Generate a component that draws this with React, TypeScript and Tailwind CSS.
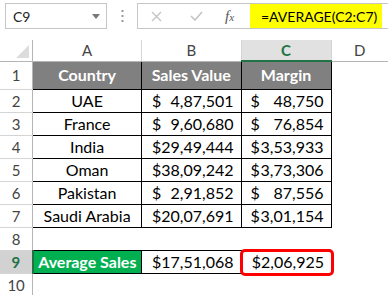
import React from 'react';

type Row = { n: number; country: string; sales: string; margin: string };

const ROWS: Row[] = [
  { n: 2, country: 'UAE', sales: '4,87,501', margin: '48,750' },
  { n: 3, country: 'France', sales: '9,60,680', margin: '76,854' },
  { n: 4, country: 'India', sales: '29,49,444', margin: '3,53,933' },
  { n: 5, country: 'Oman', sales: '38,09,242', margin: '3,73,306' },
  { n: 6, country: 'Pakistan', sales: '2,91,852', margin: '87,556' },
  { n: 7, country: 'Saudi Arabia', sales: '20,07,691', margin: '3,01,154' },
];

const rowHead = 'border-b border-r border-[#d4d4d4] border-r-[#b5b5b5] text-center text-[#444] text-[15px] p-0';
const dataCell = 'border border-black text-[16px] text-black p-0';

const Money: React.FC<{ value: string; pl: string; pr: string }> = ({ value, pl, pr }) => (
  <div className={`flex justify-between ${pl} ${pr}`}>
    <span>$</span>
    <span>{value}</span>
  </div>
);

const App: React.FC = () => {
  return (
    <div className="w-[388px] h-[295px] overflow-hidden bg-white font-['Lato','Liberation_Sans',sans-serif] select-none">
      {/* Name box + formula bar */}
      <div className="h-[40px] flex items-start pt-[3px] pl-[5px]">
        <div className="w-[102px] h-[26px] border border-[#c6c6c6] flex items-center justify-between pl-[7px] pr-[6px]">
          <span className="text-[14px] text-[#222]">C9</span>
          <svg width="8" height="5" viewBox="0 0 8 5">
            <polygon points="0,0 8,0 4,5" fill="#777" />
          </svg>
        </div>
        <div className="w-[30px] h-[26px] flex items-center justify-center">
          <svg width="3" height="12" viewBox="0 0 3 12">
            <rect x="0.5" y="0" width="2" height="2" fill="#999" />
            <rect x="0.5" y="5" width="2" height="2" fill="#999" />
            <rect x="0.5" y="10" width="2" height="2" fill="#999" />
          </svg>
        </div>
        <div className="flex-1 h-[26px] border border-r-0 border-[#c6c6c6] flex items-stretch">
          <div className="w-[112px] flex items-center">
            <svg className="ml-[13px]" width="11" height="11" viewBox="0 0 11 11">
              <path d="M1 1 L10 10 M10 1 L1 10" stroke="#c4c4c4" strokeWidth="1.4" />
            </svg>
            <svg className="ml-[28px]" width="13" height="10" viewBox="0 0 13 10">
              <path d="M1 5 L5 9 L12 1" stroke="#c4c4c4" strokeWidth="1.6" fill="none" />
            </svg>
            <span className="ml-[22px] font-['Liberation_Serif',serif] italic text-[15px] text-[#555] leading-none">
              f<span className="text-[11px]">x</span>
            </span>
          </div>
          <div className="w-[132px] bg-[#ffff00] flex items-center pl-[11px] text-[14px] text-black whitespace-nowrap">
            =AVERAGE(C2:C7)
          </div>
        </div>
      </div>

      {/* Sheet grid */}
      <table className="table-fixed border-collapse leading-[18px]">
        <colgroup>
          <col className="w-[33px]" />
          <col className="w-[110px]" />
          <col className="w-[97px]" />
          <col className="w-[90px]" />
          <col className="w-[58px]" />
        </colgroup>
        <thead>
          <tr className="h-[21px]">
            <th className="p-0 border-r border-b border-[#b5b5b5] relative">
              <svg className="absolute right-[3px] bottom-[3px]" width="13" height="13" viewBox="0 0 13 13">
                <polygon points="13,0 13,13 0,13" fill="#dcdcdc" />
              </svg>
            </th>
            <th className="p-0 border-r border-[#d4d4d4] border-b border-b-[#b5b5b5] font-normal text-[15px] text-[#444]">A</th>
            <th className="p-0 border-r border-[#d4d4d4] border-b border-b-[#b5b5b5] font-normal text-[15px] text-[#444]">B</th>
            <th className="p-0 border-r border-[#d4d4d4] border-b-2 border-b-[#217346] bg-[#e1e1e1] font-bold text-[15px] text-[#217346]">C</th>
            <th className="p-0 border-b border-b-[#b5b5b5] font-normal text-[15px] text-[#444]">D</th>
          </tr>
        </thead>
        <tbody>
          <tr className="h-[28px]">
            <td className={rowHead}>1</td>
            <td className="border border-black bg-[#808080] text-white font-bold text-[16px] text-center p-0">Country</td>
            <td className="border border-black bg-[#808080] text-white font-bold text-[16px] text-center p-0">Sales Value</td>
            <td className="border border-black bg-[#808080] text-white font-bold text-[16px] text-center p-0">Margin</td>
            <td className="p-0" />
          </tr>
          {ROWS.map((r) => (
            <tr key={r.n} className="h-[23px]">
              <td className={rowHead}>{r.n}</td>
              <td className={`${dataCell} text-center`}>{r.country}</td>
              <td className={dataCell}>
                <Money value={r.sales} pl="pl-[10px]" pr="pr-[7px]" />
              </td>
              <td className={dataCell}>
                <Money value={r.margin} pl="pl-[9px]" pr="pr-[7px]" />
              </td>
              <td className="p-0" />
            </tr>
          ))}
          <tr className="h-[23px]">
            <td className={rowHead}>8</td>
            <td className="p-0" />
            <td className="p-0" />
            <td className="p-0" />
            <td className="p-0" />
          </tr>
          <tr className="h-[23px]">
            <td className="border-b border-[#d4d4d4] border-r-2 border-r-[#217346] bg-[#d2d2d2] text-center text-[#217346] font-bold text-[15px] p-0">9</td>
            <td className="border border-black bg-[#00b050] text-white font-bold text-[16px] text-center p-0">Average Sales</td>
            <td className={dataCell}>
              <div className="text-right pr-[7px]">$17,51,068</div>
            </td>
            <td className="p-0 text-[16px] text-black relative">
              <div className="absolute inset-0 border-2 border-[#217346]" />
              <div className="absolute -left-[2px] -right-[3px] -top-[1px] -bottom-[3px] border-[3px] border-[#ff0000] rounded-[5px] bg-white" />
              <div className="relative text-right pr-[7px]">$2,06,925</div>
            </td>
            <td className="p-0" />
          </tr>
          <tr className="h-[23px]">
            <td className={rowHead}>10</td>
            <td className="p-0" />
            <td className="p-0" />
            <td className="p-0" />
            <td className="p-0" />
          </tr>
        </tbody>
      </table>
    </div>
  );
};

export default App;
